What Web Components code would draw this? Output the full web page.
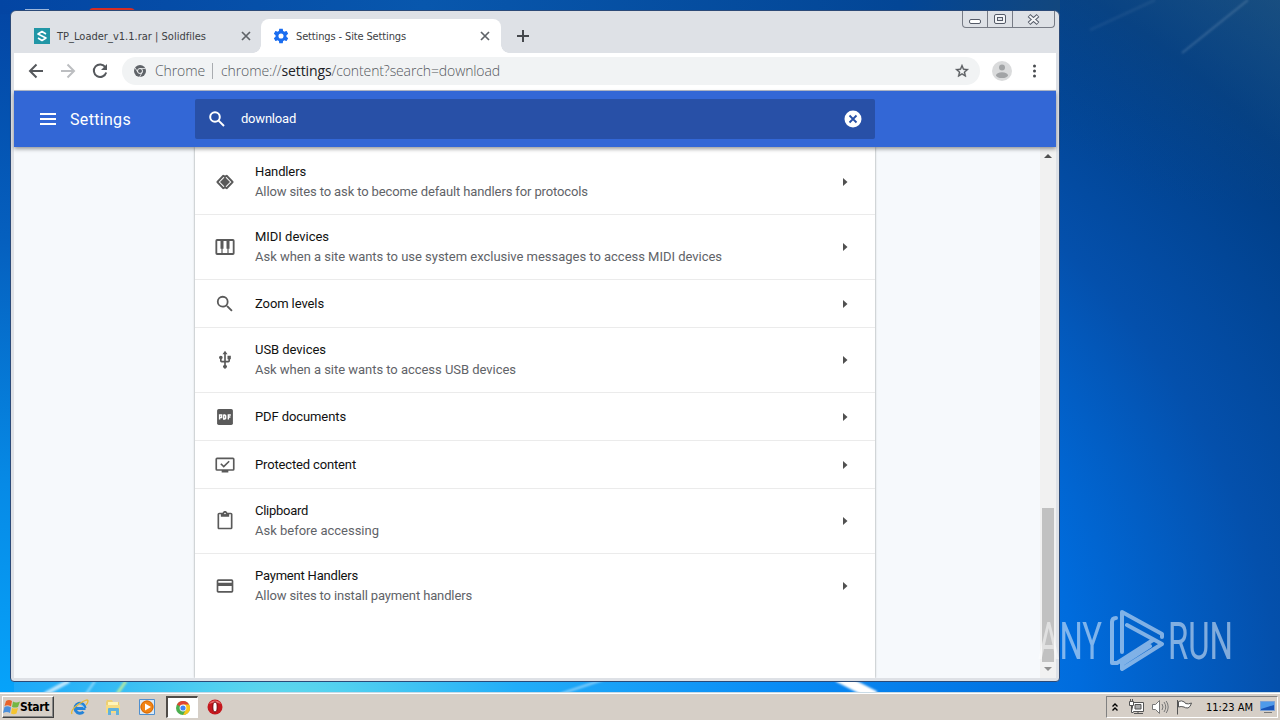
<!DOCTYPE html>
<html lang="en">
  <head>
    <meta charset="utf-8" />
    <title>Settings - Site Settings</title>
    <style>
      body {
        margin: 0;
        width: 1280px;
        height: 720px;
        overflow: hidden;
        font-family: Roboto, 'Liberation Sans', sans-serif;
      }
    </style>
  </head>
  <body>
    <template id="desktopTemplate">
      <style>
        :host {
          display: flex;
          flex-direction: column;
          position: relative;
          isolation: isolate;
          width: 1280px;
          height: 720px;
          overflow: hidden;
          background: radial-gradient(
            ellipse 1000px 760px at 280px 720px,
            #66dbea 0%,
            #50cff0 8%,
            #22adf8 24%,
            #0a8cf5 50%,
            #006cdd 80%,
            #0450ac 100%,
            #003c82 125%,
            #0c4680 140%
          );
        }
        .wallpaper,
        .watermark {
          position: absolute;
          left: 0;
          top: 0;
          pointer-events: none;
        }
        .wallpaper {
          z-index: -1;
        }
        .area {
          flex: 1;
          padding: 10px 0 0 10px;
        }
      </style>
      <svg class="wallpaper" width="1280" height="720">
        <defs>
          <linearGradient id="left" x2="0" y2="1">
            <stop offset="0" stop-color="#0345a3" />
            <stop offset=".35" stop-color="#0560bf" />
            <stop offset=".7" stop-color="#068ae6" />
            <stop offset="1" stop-color="#06a3fa" />
          </linearGradient>
          <linearGradient id="top">
            <stop offset="0" stop-color="#0345a3" />
            <stop offset=".4" stop-color="#0857ad" />
            <stop offset=".85" stop-color="#034696" />
            <stop offset="1" stop-color="#12477e" />
          </linearGradient>
          <linearGradient id="corner" x1="1" y1="0" x2=".4" y2="1">
            <stop offset="0" stop-color="#2a5a80" stop-opacity=".45" />
            <stop offset="1" stop-color="#0a4890" stop-opacity="0" />
          </linearGradient>
          <filter id="soft"><feGaussianBlur stdDeviation="1" /></filter>
        </defs>
        <path fill="url(#left)" d="M0 0h14v692H0z" />
        <path fill="url(#top)" d="M0 0h1060v14H0z" />
        <path fill="url(#corner)" d="M1060 0h220v200h-220z" />
        <g filter="url(#soft)" stroke="#fff">
          <path stroke-width="4" stroke-opacity=".7" d="M45 694l24-13" />
          <path stroke-width="2" stroke-opacity=".5" d="M86 694l9-13" />
          <path stroke-width="3" stroke="#b8eba0" d="M117 694l9-13" />
          <path stroke-width="2" stroke-opacity=".5" d="M560 694l45-15" />
          <path stroke-width="10" d="M838 677l37 19" />
          <path stroke-width="2" stroke-opacity=".16" d="M1182 53l66-53" />
          <path stroke-width="3" stroke-opacity=".06" d="M1090 30l65-30" />
        </g>
        <path fill="#d62d24" d="M89 11q1-3 4-3h37q4 0 5 3z" />
        <path fill="#9fb8dc" d="M25 9h24v1H25z" />
      </svg>
      <div class="area"><slot></slot></div>
      <slot name="taskbar"></slot>
      <svg class="watermark" width="1280" height="720">
        <g opacity=".5" fill="#fff" font-family="Roboto" font-size="51">
          <text x="1038" y="659" textLength="64" lengthAdjust="spacingAndGlyphs">ANY</text>
          <text x="1168" y="659" textLength="65" lengthAdjust="spacingAndGlyphs">RUN</text>
          <path fill="none" stroke="#fff" stroke-width="4" stroke-linejoin="round" stroke-linecap="round" d="M1116 618q-4 0-4 4v41h5l36-23M1122 652v-40l40 22v3M1127 625l35 19-40 25v-5l28-18" />
        </g>
      </svg>
    </template>

    <template id="windowTemplate">
      <style>
        :host {
          display: flex;
          flex-direction: column;
          box-sizing: border-box;
          width: 1050px;
          height: 672px;
          padding: 0 3px 3px;
          border: 1px solid #2b4a78;
          border-radius: 6px 6px 4px 4px;
          background: #dee1e6;
        }
        .strip {
          display: flex;
          height: 42px;
          align-items: flex-end;
        }
        .plus {
          width: 14px;
          height: 14px;
          margin: 0 0 10px 15px;
        }
        .controls {
          display: flex;
          align-self: flex-start;
          margin: 0 1px 0 auto;
          height: 17px;
          box-sizing: border-box;
          border: 1px solid #777b85;
          border-top: 0;
          border-radius: 0 0 4px 4px;
        }
        .controls span {
          display: flex;
          align-items: center;
          justify-content: center;
          width: 24px;
          border-right: 1px solid #777b85;
        }
        .controls span:last-child {
          width: 41px;
          border: 0;
        }
        .page {
          flex: 1;
          min-height: 0;
          display: flex;
          flex-direction: column;
          background: #f6f9fc;
        }
      </style>
      <div class="strip">
        <slot name="tab"></slot>
        <svg class="plus" viewBox="0 0 14 14"><path d="M7 1v12M1 7h12" stroke="#45484d" stroke-width="2" /></svg>
        <div class="controls">
          <span><svg width="13" height="11"><rect x=".5" y="5.5" width="11" height="4" rx="1.5" fill="#fff" stroke="#555b68" /></svg></span>
          <span><svg width="12" height="10"><rect x=".5" y=".5" width="11" height="9" rx="1.5" fill="#f4f5f7" stroke="#555b68" /><rect x="3.5" y="3.5" width="5" height="3" fill="#dee1e6" stroke="#555b68" /></svg></span>
          <span><svg width="13" height="11"><path d="M2 1.5l9 8M11 1.5l-9 8" stroke="#555b68" stroke-width="4" /><path d="M2.5 2l8 7M10.500 2l-8 7" stroke="#f4f5f7" stroke-width="2" /></svg></span>
        </div>
      </div>
      <slot name="toolbar"></slot>
      <div class="page"><slot></slot></div>
    </template>

    <template id="tabTemplate">
      <style>
        :host {
          display: flex;
          align-items: center;
          box-sizing: border-box;
          position: relative;
          height: 34px;
          width: 247px;
          padding: 0 10px 0 20px;
          font: 11px 'DejaVu Sans Condensed', 'DejaVu Sans', sans-serif;
          font-stretch: condensed;
          color: #3c4043;
        }
        :host([active]) {
          width: 240px;
          padding: 0 11px 0 12px;
          background: #fff;
          border-radius: 8px 8px 0 0;
        }
        /* curved feet where the active tab meets the toolbar */
        :host([active])::before,
        :host([active])::after {
          content: '';
          position: absolute;
          bottom: 0;
          left: -8px;
          width: 8px;
          height: 8px;
          background: radial-gradient(circle at 0 0, transparent 7.5px, #fff 8px);
        }
        :host([active])::after {
          left: 100%;
          background: radial-gradient(circle at 100% 0, transparent 7.5px, #fff 8px);
        }
        .close {
          margin-left: auto;
        }
      </style>
      <slot name="icon"></slot>
      <slot></slot>
      <svg class="close" width="10" height="10"><path d="M1 1l8 8M9 1l-8 8" stroke="#5f6368" stroke-width="1.700" /></svg>
    </template>

    <template id="toolbarTemplate">
      <style>
        :host {
          display: flex;
          align-items: center;
          box-sizing: border-box;
          height: 38px;
          padding: 0 14px 1px;
          background: #fff;
          border-bottom: 1px solid #b5bccb;
          font: 300 14px 'Open Sans', sans-serif;
          color: #55595e;
        }
        .nav {
          display: flex;
          gap: 16px;
        }
        .pill {
          display: flex;
          align-items: center;
          box-sizing: border-box;
          width: 858px;
          height: 28px;
          margin-left: 14px;
          padding: 0 10px 0 12px;
          border-radius: 14px;
          background: #f1f3f4;
        }
        .chip {
          margin-left: 9px;
          padding-right: 7px;
          border-right: 1px solid #a9acb0;
          line-height: 16px;
          width: 50px;
          margin-right: 8px;
        }
        .url {
          padding-bottom: 2px;
        }
        .star {
          margin-left: auto;
        }
        .avatar {
          margin: 0 20px 0 12px;
        }
      </style>
      <div class="nav">
        <svg width="16" height="16" fill="none" stroke="#55585c" stroke-width="2"><path d="M15 8H2M8.500 1.500L2 8l6.500 6.500" /></svg>
        <svg width="16" height="16" fill="none" stroke="#bcbec1" stroke-width="2"><path d="M1 8h13M7.500 1.500L14 8l-6.500 6.500" /></svg>
        <svg width="16" height="16" fill="none" stroke="#55585c" stroke-width="2"><path d="M13.400 4.200A6.300 6.300 0 1 0 14.200 9.500" /><path d="M15 1v6H9z" fill="#55585c" stroke="none" /></svg>
      </div>
      <div class="pill">
        <svg width="12" height="12" viewBox="0 0 12 12"><circle cx="6" cy="6" r="6" fill="#5f6368" /><circle cx="6" cy="6" r="2.500" fill="none" stroke="#f1f3f4" /><path d="M6 3.500h5.500M3.800 7.200L1 2.800M8.200 7.200L5.600 12" stroke="#f1f3f4" stroke-width=".8" /></svg>
        <div class="chip"><slot name="origin"></slot></div>
        <div class="url"><slot></slot></div>
        <svg class="star" width="16" height="16" viewBox="0 0 24 24" fill="#55585c"><path d="M22 9.240l-7.190-.620L12 2 9.190 8.630 2 9.240l5.460 4.730L5.820 21 12 17.270 18.180 21l-1.630-7.030L22 9.240zM12 15.400l-3.760 2.270 1-4.280-3.320-2.880 4.380-.380L12 6.100l1.710 4.040 4.380.380-3.320 2.880 1 4.280L12 15.400z" stroke="#55585c" stroke-width=".5" /></svg>
      </div>
      <svg class="avatar" width="20" height="20"><circle cx="10" cy="10" r="10" fill="#dadbdc" /><circle cx="10" cy="6.500" r="3" fill="#a2a4a6" /><ellipse cx="10" cy="14.200" rx="6" ry="2.900" fill="#a2a4a6" /></svg>
      <svg width="4" height="14" fill="#484b4f"><circle cx="2.500" cy="2" r="1.500" /><circle cx="2.500" cy="7" r="1.500" /><circle cx="2.500" cy="12" r="1.500" /></svg>
    </template>

    <template id="headerTemplate">
      <style>
        :host {
          display: flex;
          align-items: center;
          box-sizing: border-box;
          height: 56px;
          flex: none;
          padding-left: 26px;
          background: #3367d6;
          color: #fff;
          box-shadow: 0 2px 4px rgba(0, 0, 0, 0.4);
          z-index: 1;
          font-size: 16px;
        }
        .title {
          width: 125px;
          margin-left: 14px;
        }
        .search {
          display: flex;
          align-items: center;
          box-sizing: border-box;
          width: 680px;
          height: 40px;
          padding: 0 13px;
          border-radius: 2px;
          background: #2850a7;
          font-size: 13px;
        }
        .query {
          margin-left: 15px;
          padding-bottom: 1px;
        }
        .clear {
          margin-left: auto;
        }
      </style>
      <svg width="16" height="12" fill="#fff"><path d="M0 0h16v2H0zM0 5h16v2H0zM0 10h16v2H0z" /></svg>
      <div class="title"><slot></slot></div>
      <div class="search">
        <svg width="18" height="18" fill="none" stroke="#fff" stroke-width="2"><circle cx="7" cy="7" r="4.800" /><path d="M10.600 10.600L16 16" /></svg>
        <div class="query"><slot name="query"></slot></div>
        <svg class="clear" width="18" height="18"><circle cx="9" cy="9" r="8.500" fill="#fff" /><path d="M5.500 5.500l7 7M12.500 5.500l-7 7" stroke="#2850a7" stroke-width="1.800" /></svg>
      </div>
    </template>

    <template id="contentTemplate">
      <style>
        :host {
          display: flex;
          flex: 1;
          min-height: 0;
        }
        .card {
          box-sizing: border-box;
          width: 680px;
          margin-left: 181px;
          padding-top: 3px;
          background: #fff;
          box-shadow: 0 0 2px rgba(60, 64, 67, 0.6);
          clip-path: inset(0 -3px);
        }
        .bar {
          display: flex;
          flex-direction: column;
          align-items: center;
          width: 16px;
          box-sizing: border-box;
          margin-left: auto;
          padding: 7px 0 7px;
          background: #f1f1f1;
        }
        .thumb {
          width: 12px;
          height: 154px;
          margin: auto 0 5px;
          background: #c1c1c1;
        }
      </style>
      <div class="card"><slot></slot></div>
      <div class="bar">
        <svg width="8" height="4"><path d="M0 4l4-4 4 4z" fill="#505050" /></svg>
        <div class="thumb"></div>
        <svg width="8" height="4"><path d="M0 0l4 4 4-4z" fill="#909090" /></svg>
      </div>
    </template>

    <template id="rowTemplate">
      <style>
        :host {
          display: flex;
          align-items: center;
          box-sizing: border-box;
          height: 48px;
          padding: 0 27px 0 20px;
          border-bottom: 1px solid #ebebeb;
          font-size: 13px;
          line-height: 20px;
          color: #111;
        }
        :host([tall]) {
          height: 65px;
        }
        :host([last]) {
          border-bottom-color: transparent;
        }
        .icon {
          display: flex;
          width: 20px;
          margin-right: 20px;
        }
        .icon svg {
          width: 20px;
          height: 20px;
          fill: #5a5a5a;
        }
        .lines {
          display: flex;
          flex-direction: column;
        }
        ::slotted([slot='sub']) {
          color: #5f6368;
        }
        .arrow {
          margin-left: auto;
        }
      </style>
      <div class="icon"></div>
      <div class="lines"><slot></slot><slot name="sub"></slot></div>
      <svg class="arrow" width="6" height="8"><path d="M1 0l4.500 4L1 8z" fill="#505050" /></svg>
    </template>

    <template id="taskbarTemplate">
      <style>
        :host {
          display: flex;
          align-items: center;
          box-sizing: border-box;
          height: 28px;
          padding: 1px 2px 0 2px;
          border-top: 1px solid #c9dbe6;
          box-shadow: inset 0 1px #fff;
          background: #d6cfc7;
          font: 11px 'DejaVu Sans Condensed', 'DejaVu Sans', sans-serif;
          font-stretch: condensed;
          color: #000;
        }
        .start {
          display: flex;
          align-items: center;
          box-sizing: border-box;
          width: 52px;
          height: 22px;
          border: 1px solid #fff;
          border-right-color: #404040;
          border-bottom-color: #404040;
          box-shadow: inset -1px -1px #888;
          font-weight: bold;
          font-size: 12px;
        }
        .quick {
          display: flex;
          align-items: center;
          margin-left: 17px;
        }
        .quick > * {
          width: 18px;
          height: 18px;
          margin-right: 15px;
        }
        .quick .pressed {
          display: flex;
          align-items: center;
          justify-content: center;
          box-sizing: border-box;
          width: 32px;
          height: 22px;
          margin: 0 9px 0 -5px;
          border: 1px solid #504c48;
          border-width: 2px 1px 1px 2px;
          border-right-color: #fff;
          border-bottom-color: #fff;
          background: #fff;
        }
        .tray {
          display: flex;
          align-items: center;
          box-sizing: border-box;
          width: 172px;
          height: 22px;
          margin-left: auto;
          padding-left: 5px;
          border: 1px solid #808080;
          border-right-color: #fff;
          border-bottom-color: #fff;
        }
        .tray svg {
          flex: none;
          margin-left: 7px;
        }
        .tray svg:first-child {
          margin: 0 3px 0 0;
        }
        .clock {
          margin-left: 13px;
        }
      </style>
      <div class="start">
        <svg width="17" height="16" viewBox="0 0 17 16"><path fill="#e8632a" d="M3 2q3-2 6 0L8 7.500Q5 5.500 1.500 7z" /><path fill="#74b743" d="M10 2.500q3 2 7 0l-2 5.500q-3 1-6 0z" /><path fill="#4a8fdc" d="M1.500 8q3-1.500 6.500.500l-1 5.500q-3-2-7 0z" /><path fill="#f4c430" d="M9 9q3 1 6 0l-1.500 5.500q-3 1.500-5.500 0z" /></svg>
        <slot name="start"></slot>
      </div>
      <div class="quick">
        <svg viewBox="0 0 18 18"><path d="M14.500 10.500H5.500M14 10a5 5 0 1 0-1.500 3.800" fill="none" stroke="#2583d8" stroke-width="3" /><path d="M13 10A4.500 4.500 0 0 0 5 8" fill="none" stroke="#70c5f5" /><path d="M1 16Q-1 12 8 6t9-3q0 2-2 4" fill="none" stroke="#e9b931" stroke-width="1.300" /></svg>
        <svg viewBox="0 0 18 18"><path d="M2 4l1-2h5l1 2h6v11H2z" fill="#edcf73" /><path d="M4 4h10v5H4z" fill="#fff5b8" /><path d="M2 7h14v8H2z" fill="#f6dc83" /><path d="M4 17v-6q0-1 1-1h9q1 0 1 1v6h-3v-4H7v4z" fill="#61b2dc" /></svg>
        <svg viewBox="0 0 18 18" style="margin-left: 1px"><path d="M1.500 1.500h15v15h-15z" fill="#d9e9f7" stroke="#4f8fce" /><circle cx="9" cy="9" r="6.500" fill="#f28414" /><circle cx="9" cy="9" r="6" fill="none" stroke="#d56a08" /><path d="M7 5.500l6 3.500-6 3.500z" fill="#fff" /></svg>
        <div class="pressed">
          <svg width="14" height="14" viewBox="0 0 14 14"><circle cx="7" cy="7" r="7" fill="#4caf50" /><path d="M7 7L.9 3.500A7 7 0 0 1 13.100 3.500z" fill="#df4333" /><path d="M7 7V3.500h6.100A7 7 0 0 1 7 14l3-5.500z" fill="#f9c51b" /><circle cx="7" cy="7" r="3.400" fill="#fff" /><circle cx="7" cy="7" r="2.600" fill="#4285f4" /></svg>
        </div>
        <svg viewBox="0 0 18 18"><circle cx="8" cy="9" r="7.500" fill="#c5171d" /><path d="M2 6a7 7 0 0 1 12 0q-6-3-12 0" fill="#e86a6a" /><ellipse cx="8" cy="9" rx="2.200" ry="5" fill="#fff" stroke="#70080c" /></svg>
      </div>
      <div class="tray">
        <svg width="6" height="10" fill="none" stroke="#000" stroke-width="1.400"><path d="M.5 4.500L3 2l2.500 2.500M.5 8.500L3 6l2.500 2.500" /></svg>
        <svg width="17" height="16" fill="#fff" stroke="#555"><path d="M4.500 3.500h11v9h-11z" /><path d="M7 5.500h6v4.500H7z" fill="#aaa" /><path d="M6 14.500h9M10 12.500v2M1.500 2.500h4v4h-4zM2.500 0v2M4.500 0v2M3.500 6.500v7h2" /></svg>
        <svg width="17" height="16" fill="none" stroke="#777"><path d="M.5 5.500h3l4-4v13l-4-4h-3z" fill="#fff" /><path d="M10 5q2 3 0 6M12 3q3.500 5 0 10M14.200 2q4 6 0 12" /></svg>
        <svg width="17" height="16" fill="#fff" stroke="#555"><path d="M1.500 1v14.500M2.500 2.500q3-1.500 6 .5l1 1.500q3 1 6-.5-1 4-3.500 5-3 0-4-1-3-1-5.500 0z" /></svg>
        <div class="clock"><slot name="clock"></slot></div>
        <svg width="16" height="14"><path d="M.5 1.500h14v9H.5z" fill="#1854b8" stroke="#7da2d6" /><path d="M1 2h13v3L1 9z" fill="#4f9aea" /><path d="M4 12h8v1H4z" fill="#777" /></svg>
      </div>
    </template>

    <script>
      // stamp a template into an open shadow root
      class TemplateElement extends HTMLElement {
        constructor(id) {
          super();
          this.attachShadow({ mode: 'open' });
          this.shadowRoot.append(
            document.getElementById(id).content.cloneNode(true)
          );
        }
      }

      // one line of text, tracked out or in to fill its "w" attribute
      class UiText extends HTMLElement {
        constructor() {
          super();
          this.attachShadow({ mode: 'open' });
          this.shadowRoot.innerHTML = `
            <style>
              :host { display: flex; white-space: nowrap; }
            </style>
            <span class="run"><slot></slot></span>`;
        }
        fit() {
          const run = this.shadowRoot.querySelector('.run');
          const width = Number(this.getAttribute('w'));
          const natural = run.getBoundingClientRect().width;
          const gap = (width - natural) / this.textContent.length;
          run.style.letterSpacing = `${gap.toFixed(3)}px`;
        }
      }

      const icons = {
        handlers:
          '<path d="M12 6l6 6-6 6-6-6z"/><path d="M13.500 6L10 4.500 2.800 12l7.200 7.500 3.500-1.500M10.500 6L14 4.500l7.200 7.500-7.200 7.500-3.500-1.500" fill="none" stroke="#5a5a5a" stroke-width="2.200" stroke-linejoin="round"/>',
        midi: '<path d="M2.500 2.500h19q2 0 2 2v15q0 2-2 2h-19q-2 0-2-2v-15q0-2 2-2zM2.700 4.700v14.600h18.600V4.700z" fill-rule="evenodd"/><path d="M6.600 4h3.600v10H6.600zM13.800 4h3.600v10h-3.600zM7.700 13h1.400v7H7.700zM14.900 13h1.400v7h-1.400z"/>',
        zoom: '<path d="M15.500 14h-.79l-.28-.27A6.470 6.470 0 0 0 16 9.500 6.500 6.500 0 1 0 9.500 16c1.610 0 3.090-.590 4.230-1.570l.27.28v.79l5 4.990L20.490 19l-4.990-5zm-6 0a4.500 4.500 0 1 1 0-9 4.500 4.500 0 0 1 0 9z" transform="matrix(1.080 0 0 1.080 -1 -1)"/>',
        usb: '<path d="M15 7v4h1v2h-3V5h2l-3-4-3 4h2v8H8v-2.070c.7-.370 1.200-1.080 1.200-1.930a2.200 2.200 0 1 0-4.400 0c0 .850.5 1.560 1.200 1.930V13a2 2 0 0 0 2 2h3v3.050a2.210 2.210 0 1 0 2 0V15h3a2 2 0 0 0 2-2v-2h1V7h-4z"/>',
        pdf: '<rect x="2.500" y="2.500" width="19" height="19" rx="2"/><path d="M5.500 15V9.500H8v3H5.500M10.500 9v5.300h1.300l1-1v-2.800l-1-1h-1.300M16 15V9.500h3M16 12h2.500" fill="none" stroke="#fff" stroke-width="1.700"/>',
        protect:
          '<path d="M21.500 3h-19A2 2 0 0 0 .5 5v12a2 2 0 0 0 2 2H8v2h8v-2h5.500a2 2 0 0 0 2-2V5a2 2 0 0 0-2-2zm0 14h-19V5h19z"/><path d="M7 10.500l3.500 3.500 6.500-6.500" fill="none" stroke="#5a5a5a" stroke-width="2"/>',
        clipboard:
          '<path d="M19 2h-4.180C14.400.840 13.300 0 12 0S9.600.840 9.180 2H5a2 2 0 0 0-2 2v16c0 1.100.9 2 2 2h14a2 2 0 0 0 2-2V4a2 2 0 0 0-2-2zm-7 0a1 1 0 1 1 0 2 1 1 0 0 1 0-2zm7 18H5V4h2v3h10V4h2z"/>',
        card: '<path d="M20 4H4a2 2 0 0 0-2 2v12c0 1.110.890 2 2 2h16a2 2 0 0 0 2-2V6a2 2 0 0 0-2-2zm0 14H4v-6h16zm0-10H4V6h16z"/>',
      };

      class SettingsRow extends TemplateElement {
        constructor() {
          super('rowTemplate');
        }
        connectedCallback() {
          this.shadowRoot.querySelector('.icon').innerHTML =
            `<svg viewBox="0 0 24 24">${icons[this.getAttribute('icon')]}</svg>`;
        }
      }

      const define = (name, id) =>
        customElements.define(
          name,
          class extends TemplateElement {
            constructor() {
              super(id);
            }
          }
        );

      define('win-desktop', 'desktopTemplate');
      define('browser-window', 'windowTemplate');
      define('browser-tab', 'tabTemplate');
      define('browser-toolbar', 'toolbarTemplate');
      define('settings-header', 'headerTemplate');
      define('settings-content', 'contentTemplate');
      define('win-taskbar', 'taskbarTemplate');
      customElements.define('settings-row', SettingsRow);
      customElements.define('ui-text', UiText);
    </script>

    <win-desktop>
      <browser-window>
        <browser-tab slot="tab">
          <svg slot="icon" width="16" height="16" style="margin-right: 7px"><path d="M0 0h16v16H0z" fill="#2196a6" /><path d="M12 6L8 3.500 4 6l8 4-4 2.500L4 10" fill="none" stroke="#fff" stroke-width="1.600" stroke-linejoin="round" /></svg>
          <ui-text w="149">TP_Loader_v1.1.rar | Solidfiles</ui-text>
        </browser-tab>
        <browser-tab slot="tab" active>
          <svg slot="icon" width="16" height="16" viewBox="1 1 22 22" style="margin-right: 7px"><path fill="#1a6df0" d="M19.430 12.980c.040-.320.070-.640.070-.980s-.030-.660-.070-.980l2.110-1.650c.190-.150.240-.420.120-.640l-2-3.460c-.120-.220-.390-.300-.610-.220l-2.490 1c-.520-.400-1.080-.730-1.690-.980l-.380-2.650C14.460 2.180 14.250 2 14 2h-4c-.250 0-.460.180-.490.420l-.380 2.650c-.610.250-1.170.590-1.690.980l-2.490-1c-.230-.090-.490 0-.610.220l-2 3.460c-.130.220-.070.490.120.640l2.110 1.650c-.040.320-.070.650-.070.980s.030.660.070.980l-2.110 1.650c-.190.150-.240.420-.120.640l2 3.460c.120.220.390.300.610.220l2.490-1c.520.400 1.080.730 1.690.980l.380 2.650c.030.240.240.420.490.420h4c.250 0 .460-.180.490-.420l.380-2.650c.610-.250 1.170-.590 1.690-.980l2.490 1c.230.090.490 0 .610-.220l2-3.460c.120-.220.070-.490-.120-.640l-2.110-1.650zM12 15.500a3.500 3.500 0 1 1 0-7 3.500 3.500 0 0 1 0 7z" /></svg>
          <ui-text w="110">Settings - Site Settings</ui-text>
        </browser-tab>
        <browser-toolbar slot="toolbar">
          <ui-text slot="origin" w="50">Chrome</ui-text>
          <ui-text w="279">chrome://<span style="color: #202124; font-weight: 400">settings</span>/content?search=download</ui-text>
        </browser-toolbar>
        <settings-header>
          <ui-text w="61">Settings</ui-text>
          <ui-text slot="query" w="55">download</ui-text>
        </settings-header>
        <settings-content>
          <settings-row icon="handlers" tall>
            <ui-text w="51">Handlers</ui-text>
            <ui-text slot="sub" w="333">Allow sites to ask to become default handlers for protocols</ui-text>
          </settings-row>
          <settings-row icon="midi" tall>
            <ui-text w="74">MIDI devices</ui-text>
            <ui-text slot="sub" w="467">Ask when a site wants to use system exclusive messages to access MIDI devices</ui-text>
          </settings-row>
          <settings-row icon="zoom">
            <ui-text w="69">Zoom levels</ui-text>
          </settings-row>
          <settings-row icon="usb" tall>
            <ui-text w="71">USB devices</ui-text>
            <ui-text slot="sub" w="261">Ask when a site wants to access USB devices</ui-text>
          </settings-row>
          <settings-row icon="pdf">
            <ui-text w="91">PDF documents</ui-text>
          </settings-row>
          <settings-row icon="protect">
            <ui-text w="101">Protected content</ui-text>
          </settings-row>
          <settings-row icon="clipboard" tall>
            <ui-text w="53">Clipboard</ui-text>
            <ui-text slot="sub" w="124">Ask before accessing</ui-text>
          </settings-row>
          <settings-row icon="card" tall last>
            <ui-text w="103">Payment Handlers</ui-text>
            <ui-text slot="sub" w="217">Allow sites to install payment handlers</ui-text>
          </settings-row>
        </settings-content>
      </browser-window>
      <win-taskbar slot="taskbar">
        <ui-text slot="start" w="29">Start</ui-text>
        <ui-text slot="clock" w="47">11:23 AM</ui-text>
      </win-taskbar>
    </win-desktop>
    <script>
      document.querySelectorAll('ui-text').forEach((text) => text.fit());
    </script>
  </body>
</html>
